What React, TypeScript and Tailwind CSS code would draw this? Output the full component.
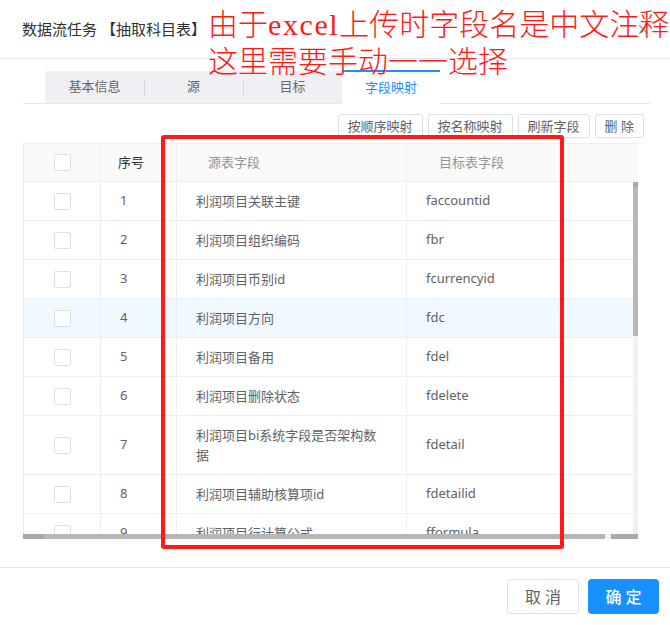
import React from 'react';
import { X } from 'lucide-react';

const rows = [
  { no: 1, src: '利润项目关联主键', dst: 'faccountid' },
  { no: 2, src: '利润项目组织编码', dst: 'fbr' },
  { no: 3, src: '利润项目币别id', dst: 'fcurrencyid' },
  { no: 4, src: '利润项目方向', dst: 'fdc', active: true },
  { no: 5, src: '利润项目备用', dst: 'fdel' },
  { no: 6, src: '利润项目删除状态', dst: 'fdelete' },
  { no: 7, src: '利润项目bi系统字段是否架构数据', dst: 'fdetail' },
  { no: 8, src: '利润项目辅助核算项id', dst: 'fdetailid' },
  { no: 9, src: '利润项目行计算公式', dst: 'fformula' },
  { no: 10, src: '利润项目行次', dst: 'fline' },
];

const tabs = ['基本信息', '源', '目标'];

const Checkbox = () => (
  <span className="block w-[17px] h-[17px] rounded-[2px] border border-[#dcdfe6] bg-white" />
);

export default function App() {
  return (
    <div
      className="relative w-[670px] h-[625px] bg-white overflow-hidden"
      style={{ fontFamily: '"Noto Sans", "Noto Sans CJK SC", sans-serif' }}
    >
      {/* Header */}
      <div className="h-[59px] flex items-center justify-between pl-[22px] pr-[19px] border-b border-[#e8e8e8]">
        <span className="text-[15px] text-[#303133] whitespace-nowrap">数据流任务 【抽取科目表】</span>
        <X size={15} className="text-[#909399]" />
      </div>

      {/* Tabs */}
      <div className="mt-[11px] mx-[23px] w-[627px] flex border-b border-[#e4e7ed] h-[34px]">
        <div className="ml-[22px] flex bg-[#f0f0f4] mt-px h-[32px]">
          {tabs.map((t, i) => (
            <div key={t} className="w-[99px] flex items-center justify-center relative text-[13px] text-[#666]">
              {i > 0 && <span className="absolute left-0 top-[9px] h-[16px] w-px bg-[#d8d8dc]" />}
              {t}
            </div>
          ))}
        </div>
        <div className="w-[98px] h-[34px] -mb-px bg-white border-t-2 border-[#1890ff] flex items-center justify-center text-[13px] text-[#1890ff]">
          字段映射
        </div>
      </div>

      {/* Action buttons */}
      <div className="mt-[10px] pr-[26px] flex justify-end gap-[5px]">
        {['按顺序映射', '按名称映射', '刷新字段', '删 除'].map((b) => (
          <button
            key={b}
            className="h-[24px] px-[9px] rounded-[3px] border border-[#dcdfe6] bg-white text-[13px] text-[#606266] leading-none whitespace-pre"
          >
            {b}
          </button>
        ))}
      </div>

      {/* Table */}
      <div className="mt-[5px] ml-[23px] w-[615px] flex flex-col">
        <div className="flex border-t border-l border-[#ebeef5] bg-[#fafafa] h-[39px]">
          <div className="w-[77px] border-r border-b border-[#ebeef5] flex items-center justify-center">
            <Checkbox />
          </div>
          <div className="w-[76px] border-r border-b border-[#ebeef5] flex items-center pl-[17px] text-[13px] text-[#303133]">
            序号
          </div>
          <div className="w-[230px] border-r border-b border-[#ebeef5] flex items-center pl-[31px] text-[13px] text-[#909399]">
            源表字段
          </div>
          <div className="w-[226px] border-b border-[#ebeef5] flex items-center pl-[32px] text-[13px] text-[#909399]">
            目标表字段
          </div>
          <div className="w-[5px]" />
        </div>
        <div className="flex">
          <div className="w-[610px] h-[352px] overflow-hidden border-l border-[#ebeef5]">
            {rows.map((r) => (
              <div
                key={r.no}
                className={`flex border-b border-[#ebeef5] text-[13px] text-[#606266] ${r.active ? 'bg-[#f0f9ff]' : 'bg-white'}`}
              >
                <div className="w-[77px] shrink-0 border-r border-[#ebeef5] flex items-center justify-center">
                  <Checkbox />
                </div>
                <div className="w-[76px] shrink-0 border-r border-[#ebeef5] flex items-center pl-[19px]">{r.no}</div>
                <div className="w-[230px] shrink-0 border-r border-[#ebeef5] flex items-center pl-[19px] pr-[18px] py-[9px] leading-[20px]">
                  {r.src}
                </div>
                <div className="w-[226px] shrink-0 flex items-center pl-[19px]">{r.dst}</div>
              </div>
            ))}
          </div>
          <div className="w-[5px] h-[352px] flex flex-col bg-[#f1f1f1]">
            <div className="h-[5px] bg-[#a8a8a8]" />
            <div className="h-[149px] bg-[#b8b8b8]" />
          </div>
        </div>
        <div className="flex h-[5px]">
          <div className="w-[21px] bg-[#a8a8a8]" />
          <div className="w-[561px] bg-[#b6b6b6]" />
          <div className="w-[6px] bg-[#f1f1f1]" />
          <div className="w-[22px] bg-[#a8a8a8]" />
          <div className="w-[5px] bg-[#a8a8a8]" />
        </div>
      </div>

      {/* Footer */}
      <div className="mt-[28px] border-t border-[#e8e8e8] pt-[11px] pr-[11px] flex justify-end gap-[9px]">
        <button className="w-[72px] h-[35px] rounded-[4px] border border-[#dcdfe6] bg-white text-[16px] text-[#606266] tracking-[4px] pl-[4px]">
          取消
        </button>
        <button className="w-[71px] h-[35px] rounded-[4px] bg-[#1890ff] text-[16px] font-medium text-white tracking-[4px] pl-[4px]">
          确定
        </button>
      </div>

      {/* Red annotation overlay */}
      <div
        className="absolute left-[208px] top-[5px] text-[30px] leading-[35px] text-[#ff1a1a] font-light whitespace-nowrap"
        style={{ fontFamily: '"Noto Sans CJK SC", sans-serif' }}
      >
        <div>
          由于
          <span className="tracking-[1.6px]" style={{ fontFamily: '"Liberation Serif", serif' }}>excel</span>
          上传时字段名是中文注释
        </div>
        <div>这里需要手动一一选择</div>
      </div>
      <div className="absolute left-[161px] top-[135px] w-[403px] h-[414px] border-4 border-[#ff1a1a] rounded-[3px]" />
    </div>
  );
}
